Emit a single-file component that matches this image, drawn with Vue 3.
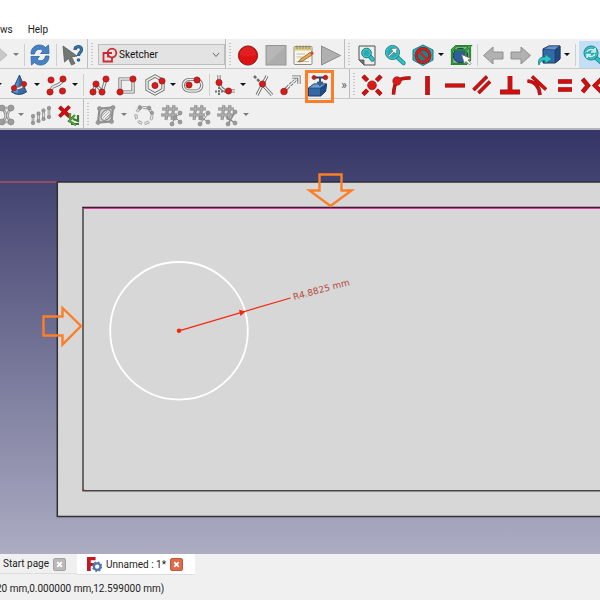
<script setup>
import { ref } from 'vue'

const workbench = ref('Sketcher')

const dot = (x, y, r = 3.1) =>
  `<circle cx="${x}" cy="${y}" r="${r}" fill="#dc1818" stroke="#8a1c1c" stroke-width=".7"/>`
const ball = (x, y, r = 2) =>
  `<circle cx="${x}" cy="${y}" r="${r}" fill="#9c9c9c" stroke="#868686" stroke-width=".7"/>`
const rod = (d, extra = '') =>
  `<path d="${d}" fill="none" stroke="#6c716e" stroke-width="3.2" ${extra}/><path d="${d}" fill="none" stroke="#eceeec" stroke-width="1.5" ${extra}/>`
const bar = (d, w = 4) =>
  `<path d="${d}" fill="none" stroke="#7e2020" stroke-width="${w}"/><path d="${d}" fill="none" stroke="#d40e0e" stroke-width="${w - 1.1}"/>`
const grayRod = (d) =>
  `<path d="${d}" fill="none" stroke="#8f8f8f" stroke-width="2.6"/><path d="${d}" fill="none" stroke="#dcdcdc" stroke-width="1"/>`
const lens = (x, y, r, hx, hy) =>
  `<path d="M${x + r * 0.7} ${y + r * 0.7}L${hx} ${hy}" stroke="#2a7e84" stroke-width="4.4" stroke-linecap="round"/><path d="M${x + r * 0.7} ${y + r * 0.7}L${hx} ${hy}" stroke="#27c3c7" stroke-width="2.8" stroke-linecap="round"/><circle cx="${x}" cy="${y}" r="${r}" fill="#2fa9b0" stroke="#27757b"/><circle cx="${x}" cy="${y}" r="${r - 1}" fill="none" stroke="#35d3d5" stroke-width="1"/>`
const hash = (tail) =>
  `<path d="M8 2L6 17M14 2L12 17M2 6H18M1 12H17" stroke="#888" stroke-width="3"/><path d="M8 2L6 17M14 2L12 17M2 6H18M1 12H17" stroke="#b0b0b0" stroke-width="1.4"/>${tail}`
const halfArrow =
  'M3 11C3 5 7 2 11.500 2C14 2 16 3 17.500 4.500L20.500 2L21 10.500H12.500L15 7.800C11.500 4.800 7.500 6.500 6.500 11Z'

const icons = {
  redoFaded: '<path d="M9 9H12V4L21 12L12 20V16H4V9Z" fill="#c9c9c9" stroke="#bababa"/>',
  refresh: `<g fill="#4683c6" stroke="#2f619f" stroke-width=".8"><path d="${halfArrow}"/><path d="${halfArrow}" transform="rotate(180 12 12)"/></g>`,
  whatsThis:
    '<path d="M3 3L17 13L11.500 14L15 20.500L11.500 22L8.500 15.500L4.500 19Z" fill="#727774" stroke="#575c59" stroke-width=".8"/><path d="M15 7C15 2.500 21.500 2.500 21.500 6.500C21.500 9.500 18.500 9.500 18.500 13" fill="none" stroke="#24547f" stroke-width="3.200"/><path d="M15 7C15 2.500 21.500 2.500 21.500 6.500C21.500 9.500 18.500 9.500 18.500 13" fill="none" stroke="#3b78b0" stroke-width="1.400"/><circle cx="18.500" cy="17" r="1.800" fill="#2c659c"/>',
  record:
    '<circle cx="12" cy="12.500" r="9.600" fill="#dd1212" stroke="#7d1c1c"/><path d="M4 12A8 8 0 0 1 20 12Q12 15 4 12Z" fill="#ef4040" opacity=".3"/>',
  stop: '<rect x="2" y="2.500" width="20" height="19.500" fill="#adadad" stroke="#979797"/><path d="M3 21V3.500H21Z" fill="#b7b7b7"/>',
  macro:
    '<rect x="3" y="3.500" width="18" height="18" rx="1" fill="#f7f6ec" stroke="#8f8d80"/><path d="M4 4H20V7.500H4Z" fill="#d9c878"/><path d="M6 2.500V6M9 2.500V6M12 2.500V6M15 2.500V6M18 2.500V6" stroke="#8e8563" stroke-width="1"/><path d="M5.500 11H14M5.500 14H12M5.500 18.500H18" stroke="#bcbcb4"/><path d="M9 16.500L19 9.500L21 12L11 18.500L7.500 19Z" fill="#efa841" stroke="#80603a" stroke-width=".8"/><path d="M19 9.500L21 8L23 10.500L21 12Z" fill="#c94a4a"/>',
  play: '<path d="M2.500 3L21.500 12.500L2.500 22Z" fill="#b0b0b0" stroke="#8c8c8c"/>',
  fitAll: `<path d="M4 3H20V22H9L4 17Z" fill="#eceeec" stroke="#4b504e"/><path d="M4 17H9V22Z" fill="#777" stroke="#4b504e" stroke-width=".8"/>${lens(11.5, 10, 4.8, 17.5, 16.5)}`,
  fitSelection: `${lens(9.5, 9.5, 7, 20.5, 20)}<path d="M5 13L10 8L8 6L14 5L13 11L11 9L6 14Z" fill="#fff" stroke="#4b7d80" stroke-width=".6"/>`,
  drawStyle:
    '<path d="M12 2L22 7V17L12 22.500L2 17V7Z" fill="#25bac2" stroke="#1d777c"/><circle cx="12" cy="12.500" r="6.800" fill="#1d8288" stroke="#702020" stroke-width="3.200"/><circle cx="12" cy="12.500" r="6.800" fill="none" stroke="#d91c1c" stroke-width="2.100"/><path d="M7.500 8L16.500 17" stroke="#d91c1c" stroke-width="2.300"/>',
  boundingBox:
    '<path d="M3 7L7 3H21V17L17 21H3Z" fill="#8ca4a8"/><circle cx="11.500" cy="12.500" r="7.200" fill="#2d5f9a" stroke="#1c3a60"/><path d="M3 7H17V21H3ZM3 7L7 3H21L17 7M21 3V17L17 21" fill="none" stroke="#195a1c" stroke-width="2.200"/><path d="M3 7H17V21H3ZM3 7L7 3H21L17 7M21 3V17L17 21" fill="none" stroke="#33b637" stroke-width="1.200"/><path d="M12.500 11.500L22 15.500L19 17L22 20.500L20.500 22L17 18.500L15.500 21Z" fill="#fff" stroke="#666" stroke-width=".7"/>',
  back: '<path d="M2.500 12.500L12 4V9H22V16H12V21Z" fill="#b1b1b1" stroke="#909090"/>',
  forward: '<path d="M21.500 12.500L12 4V9H2V16H12V21Z" fill="#b1b1b1" stroke="#909090"/>',
  linkView:
    '<path d="M6 6L12 3H23V16L18 20H6Z" fill="#336aa9" stroke="#1d3557"/><path d="M6 6L12 3H23L18 7Z" fill="#5f94d0" stroke="#1d3557" stroke-width=".6"/><path d="M18 7L23 3V16L18 20Z" fill="#1f4a80" stroke="#1d3557" stroke-width=".6"/><path d="M2 22C0 16 4 13.500 8 14V11L15 16L8 20.500V17.500C5 17 3 18.500 2 22Z" fill="#2cc6cb" stroke="#1a7075" stroke-width=".8"/>',
  zoomSync: `${lens(10, 10, 7, 21, 20)}<path d="M6 9C7 6 12 5.500 14 8.500M14 11C13 14 8 14.500 6 11.500M14 5V9H10M6 15V11.500H10" fill="none" stroke="#d3f3f3" stroke-width="1.500"/>`,
  cone: `<path d="M12.500 2L19.500 19Q12 24 4.500 19Z" fill="#356aa8" stroke="#183760" stroke-width=".8"/><path d="M12 4L11 20.500L6 19Z" fill="#5a8fcb"/>${rod('M7 15Q14 17 17 11')}${dot(7, 15, 2.6)}${dot(17, 11, 2.6)}`,
  bspline: `${rod('M5.500 19C7 9 15 16 18 6')}${dot(6, 7)}${dot(18, 6)}${dot(5, 19)}${dot(17.5, 18)}`,
  polyline: `${rod('M6 19L9 11L15 19L19 6')}${dot(6, 19)}${dot(9, 11)}${dot(15, 19)}${dot(19, 6)}`,
  rectangle: `${rod('M5 6H18V19H5Z')}${dot(5, 19)}${dot(18, 6)}`,
  hexagon: `${rod('M12 3L20 7.500V16.500L12 21L4 16.500V7.500Z')}${dot(12, 12.5)}${dot(19, 8)}`,
  slot: `${rod('M8 6.500H15A5.500 5.500 0 0 1 15 18H8A5.500 5.500 0 0 1 8 6.500Z')}${dot(8, 12)}${dot(16, 7)}`,
  fillet: `${rod('M6 2V8Q7 18 15 18H22')}<path d="M6 14V22M2 18.500H12" stroke="#727674" stroke-width="2" stroke-dasharray="2 1"/>${dot(6, 9.5)}${dot(15.5, 18)}`,
  trim: `${rod('M16 3L6 22M11 11L21 22')}<path d="M3 3L10 10" stroke="#6a6f6c" stroke-width="2.600" stroke-dasharray="3 1.500"/>${dot(11.5, 11)}`,
  extend: `${rod('M5 18L10 13')}${rod('M11 12L20 4', 'stroke-dasharray="3 1"')}${rod('M13 4H20V11')}${dot(5, 18.5, 3.3)}`,
  external:
    `<path d="M1.500 15L7 11H19.500L18.500 18.500L13.500 23H1.500Z" fill="#3467a5" stroke="#1e3a61"/><path d="M1.500 15L7 11H19.500L13.500 15Z" fill="#6a9fd7" stroke="#1e3a61" stroke-width=".6"/><path d="M13.500 15L19.500 11L18.500 18.500L13.500 23Z" fill="#214d84" stroke="#1e3a61" stroke-width=".6"/><path d="M7 4.500H18M13 5V11" stroke="#2b4260" fill="none" stroke-width="1.800"/><path d="M10 9L13 13L16 9Z" fill="#3467a5" stroke="#1e3a61" stroke-width=".6"/>${dot(7, 4.5, 2)}${dot(18.5, 4.5, 2.2)}`,
  coincident: `${bar('M3 3L7.500 7.500M21 3L16.500 7.500M3 21.500L7.500 17M21 21.500L16.500 17', 4.4)}${dot(12, 12.3, 4.4)}`,
  pointOn: `${bar('M5.500 21.500Q6 12 9 8Q14 4.500 22.500 5', 3.6)}${dot(9, 8, 4.2)}`,
  vertical: bar('M12.500 3V22', 4.6),
  horizontal: bar('M2 12.500H22', 4.2),
  parallel: bar('M3.500 17L17 3.500M8.500 20L20 8.500', 3.6),
  perpendicular: bar('M12 3V19M2 19H22', 4.8),
  tangent: bar('M7 3.500L21 16.500M2.500 8Q14 9 15 22', 3.6),
  equal: bar('M5 8.500H19M5 16.500H19', 4.4),
  symmetric: bar('M2.500 6L8 12.500L2.500 19M21.500 6L15 12.500L21.500 19', 4.4),
  mirror: `${grayRod('M11 5C16 10 16 15 11 19M21 5C15 10 15 15 21 19M11 5H20M11 19H20')}${ball(11, 5, 3)}${ball(20, 5, 3)}${ball(11, 19, 3)}${ball(20, 19, 3)}`,
  array: `${grayRod('M4 13V20M9.500 10.500V18M14.500 7.500V16M20 5V14')}${[[4, 13], [4, 20], [9.5, 10.5], [9.5, 18], [14.5, 7.5], [14.5, 16], [20, 5], [20, 14]].map(([x, y]) => ball(x, y, 1.7)).join('')}`,
  deleteAxes: `${bar('M2.500 4L12.500 13.500M12.500 3.500L2.500 13.500', 3.8)}<path d="M13 10V18M18 12L12 18L19 22M21 12V18L16 16M14 21L22 21" fill="none" stroke="#3a7a2f" stroke-width="2.200"/><path d="M13 10V18M18 12L12 18L19 22" fill="none" stroke="#62b347" stroke-width=".9"/>`,
  plane: `<path d="M5.500 5.500L19 4.500L17.500 18.500L4 19.500Z" fill="#cfcfcf" stroke="#909090" stroke-width="2.200"/><ellipse cx="12" cy="12" rx="4" ry="6" transform="rotate(40 12 12)" fill="#eee" stroke="#909090" stroke-width="1.300"/><path d="M9 15L15 9M8 13L13 8M11 16L16 11" stroke="#aaa"/>${ball(5.5, 5.5)}${ball(19, 4.5)}${ball(4, 19.5)}${ball(17.5, 18.5)}`,
  ring: `<circle cx="12" cy="12.500" r="8" fill="none" stroke="#9d9d9d" stroke-width="3" stroke-dasharray="4.600 2.600"/><circle cx="12" cy="12.500" r="8" fill="none" stroke="#eee" stroke-width="1.200" stroke-dasharray="3.600 3.600" stroke-dashoffset="-.500"/>${ball(8, 4.5, 1.9)}${ball(17, 5, 1.9)}${ball(20, 10, 1.7)}`,
  gridA: hash(`<path d="M12 21L15 14L20 11M16 15L20 19" stroke="#888" fill="none"/>${ball(12, 21)}${ball(20, 10)}${ball(15, 15)}${ball(20, 19)}`),
  gridB: hash(`<path d="M12 21L20 11M14 15L20 19" stroke="#888" fill="none"/>${ball(12, 21)}${ball(20, 10)}${ball(20, 19)}${ball(13, 15)}`),
  gridC: hash(`<path d="M10 14L19 20M19 9L12 21" stroke="#888" stroke-width="1.500" fill="none"/>${ball(19, 9)}${ball(19, 20)}${ball(12, 21)}`),
}

const t = (icon, label, extra = {}) => ({ kind: 'tool', icon, label, ...extra })
const split = (icon, label, extra = {}) => t(icon, label, { menu: true, ...extra })
const sep = { kind: 'sep' }

const file = [split('redoFaded', 'Redo', { disabled: true }), sep, t('refresh', 'Refresh'), sep, t('whatsThis', "What's this?")]
const macro = [t('record', 'Record macro'), t('stop', 'Stop macro', { disabled: true }), t('macro', 'Macros'), t('play', 'Execute macro', { disabled: true })]
const view = [
  t('fitAll', 'Fit all'), t('fitSelection', 'Fit selection'), split('drawStyle', 'Draw style'), t('boundingBox', 'Bounding box'), sep,
  t('back', 'Back', { disabled: true }), t('forward', 'Forward', { disabled: true }), split('linkView', 'Linked object'), sep,
  t('zoomSync', 'Sync view', { active: true }),
]
const geometry = [
  split('cone', 'Arc', { hiddenIcon: true }), split('cone', 'Conic'), split('bspline', 'B-spline'), sep,
  t('polyline', 'Polyline'), t('rectangle', 'Rectangle'), split('hexagon', 'Polygon'), t('slot', 'Slot'), sep,
  split('fillet', 'Fillet'), t('trim', 'Trim'), t('extend', 'Extend'), t('external', 'External geometry', { marked: true }),
]
const constraints = ['coincident', 'pointOn', 'vertical', 'horizontal', 'parallel', 'perpendicular', 'tangent', 'equal', 'symmetric'].map((n) => t(n, n))
const sketchTools = [split('mirror', 'Symmetry', { disabled: true }), t('array', 'Array', { disabled: true }), t('deleteAxes', 'Remove axes alignment')]
const splines = [
  split('plane', 'Spline information', { disabled: true }), t('ring', 'Convert to spline', { disabled: true }),
  t('gridA', 'Increase degree', { disabled: true }), t('gridB', 'Decrease degree', { disabled: true }),
  split('gridC', 'Knot multiplicity', { disabled: true }),
]

const rows = [
  { name: 'first', bars: [{ name: 'file', items: file }, { name: 'workbench', grip: true, picker: true, items: [] }, { name: 'macro', grip: true, even: true, items: macro }, { name: 'view', grip: true, items: view }] },
  { name: 'second', bars: [{ name: 'geometry', items: geometry, more: true }, { name: 'constraints', grip: true, even: true, items: constraints }] },
  { name: 'third', bars: [{ name: 'tools', items: sketchTools }, { name: 'splines', grip: true, items: splines }] },
]
</script>

<template>
  <div class="window">
    <nav class="menu">
      <a href="#">ws</a>
      <a href="#">Help</a>
    </nav>

    <div v-for="row in rows" :key="row.name" class="row" :class="row.name">
      <div v-for="group in row.bars" :key="group.name" class="bar" :class="[group.name, { even: group.even }]" role="toolbar" :aria-label="group.name">
        <span v-if="group.grip" class="grip"></span>
        <label v-if="group.picker" class="picker">
          <svg viewBox="0 0 16 16" width="16" height="16" fill="none" stroke="#cb2a33" stroke-width="1.800" aria-hidden="true">
            <path d="M6 6H1.500V14.500H10V10" /><circle cx="10" cy="6" r="4.300" /><path d="M6 10.500V6H10" />
          </svg>
          <select v-model="workbench" aria-label="Workbench">
            <option>Sketcher</option>
          </select>
          <svg class="chevron" viewBox="0 0 8 8" width="8" height="8" fill="none" stroke="#666" aria-hidden="true"><path d="M1 2L4 5.500L7 2" /></svg>
        </label>
        <template v-for="(item, i) in group.items" :key="i">
          <span v-if="item.kind === 'sep'" class="sep"></span>
          <button v-else type="button" class="tool" :class="{ split: item.menu, active: item.active, marked: item.marked }" :disabled="item.disabled" :aria-label="item.label">
            <svg class="icon" viewBox="0 0 24 24" aria-hidden="true" v-html="item.hiddenIcon ? '' : icons[item.icon]"></svg>
            <span v-if="item.menu" class="caret"></span>
          </button>
        </template>
        <button v-if="group.more" type="button" class="more" aria-label="More tools">»</button>
      </div>
    </div>

    <main class="scene">
      <svg viewBox="0 130 600 424" preserveAspectRatio="xMinYMin slice" role="img" aria-label="Sketch view">
        <defs>
          <linearGradient id="sky" x1="0" y1="0" x2="0" y2="1">
            <stop offset="0" stop-color="#353566" />
            <stop offset="1" stop-color="#acacc3" />
          </linearGradient>
        </defs>
        <rect y="130" width="600" height="424" fill="url(#sky)" />
        <path d="M0 182H57" stroke="#a8525f" stroke-width="1.400" />
        <rect x="57.300" y="182" width="560" height="334.500" fill="#d7d7d7" stroke="#2f2f35" stroke-width="1.500" />
        <path d="M600 490.700H83V208" fill="none" stroke="#444" stroke-width="1.500" />
        <path d="M82.300 207.300H600" stroke="#1b0b18" stroke-width="1.200" />
        <path d="M84 208.400H600" stroke="#d2409c" stroke-width="1.200" />
        <circle cx="83.500" cy="490" r="1" fill="#b33022" />
        <circle cx="179" cy="330.800" r="68.800" fill="none" stroke="#fff" stroke-width="1.800" />
        <path d="M179 330.800L290.500 298" stroke="#f4260b" stroke-width="1.200" />
        <circle cx="179" cy="330.800" r="2.200" fill="#f4260b" />
        <path d="M245.500 311.500L239 309.800L240.500 316Z" fill="#f4260b" />
        <text class="dimension" transform="translate(294 300) rotate(-15)">R4.8825 mm</text>
        <g fill="none" stroke="#fc7f27" stroke-width="2.400">
          <path d="M319.500 174.500H341.500V190.500H351.500L330.500 206L309.500 190.500H319.500Z" />
          <path d="M43.500 316.500H62.500V308L81 326L62.500 344.500V335.500H43.500Z" />
        </g>
      </svg>
    </main>

    <div class="tabs">
      <div class="tab">
        <a href="#">Start page</a>
        <button type="button" class="close" aria-label="Close Start page"><svg viewBox="0 0 12 12"><path d="M3.500 3.500L8.500 8.500M8.500 3.500L3.500 8.500" /></svg></button>
      </div>
      <div class="tab current">
        <svg class="doc" viewBox="0 0 14 14" aria-hidden="true">
          <path d="M0 0H8V3H3.500V5.500H6.500V8.500H3.500V13H0Z" fill="#c8171e" />
          <circle cx="9.500" cy="9" r="3" fill="none" stroke="#4f76ad" stroke-width="2" />
          <circle cx="9.500" cy="9" r="4.200" fill="none" stroke="#4f76ad" stroke-width="1.400" stroke-dasharray="1.700 1.600" />
        </svg>
        <a href="#">Unnamed : 1*</a>
        <button type="button" class="close" aria-label="Close Unnamed"><svg viewBox="0 0 12 12"><path d="M3.500 3.500L8.500 8.500M8.500 3.500L3.500 8.500" /></svg></button>
      </div>
    </div>
    <footer class="status">20 mm,0.000000 mm,12.599000 mm)</footer>
  </div>
</template>

<style>
body {
  background: #f0f0f0;
}
</style>

<style scoped>
.window {
  display: flex;
  flex-direction: column;
  min-height: 100vh;
  overflow: hidden;
  background: #f0f0f0;
  color: #222;
  font: 10px/14px Roboto, "Noto Sans", sans-serif;
}
a {
  color: inherit;
  text-decoration: none;
}
button {
  padding: 0;
  border: 0;
  background: none;
  color: inherit;
  font: inherit;
}
.menu {
  display: flex;
  gap: 15px;
  padding: 23px 0 2px;
  background: #fff;
}
.row {
  display: flex;
  height: 30px;
  box-sizing: border-box;
  border-bottom: 1px solid #c9c9c9;
}
.third {
  height: 31px;
  border-bottom: 2px solid #b4b4be;
}
.bar {
  display: flex;
  flex: none;
  align-items: center;
  padding-top: 2px;
  border-right: 1px solid #bdbdbd;
}
.bar:last-child {
  border-right: 0;
}
.file {
  margin-left: -16px;
  padding-right: 1px;
}
.geometry {
  margin-left: -33px;
}
.tools {
  margin-left: -11px;
}
.grip {
  width: 2px;
  height: 24px;
  margin: 0 3px;
  background: repeating-linear-gradient(#c6c6c6 0 1px, transparent 1px 3px);
}
.sep {
  width: 1px;
  height: 22px;
  margin: 0 1px 0 2px;
  background: #cfcfcf;
}
.tool {
  display: flex;
  flex: none;
  align-items: center;
  justify-content: center;
  position: relative;
  width: 28px;
  height: 27px;
}
.even .tool:nth-of-type(even) {
  width: 27px;
}
.split {
  width: 38px;
  justify-content: flex-start;
  gap: 1px;
  padding-left: 2px;
}
.icon {
  flex: none;
  width: 24px;
  height: 24px;
}
.caret {
  width: 0;
  border: 3px solid transparent;
  border-top-color: #111;
  border-bottom: 0;
  margin-left: 2px;
}
.tool:disabled .caret {
  border-top-color: #7d7d7d;
}
.active {
  margin-left: 2px;
  background: #c3dff5;
}
.marked::after {
  content: "";
  position: absolute;
  top: -1px;
  left: 0;
  z-index: 1;
  width: 23px;
  height: 27px;
  border: 3px solid #fc7f27;
}
.more {
  width: 16px;
  padding-left: 6px;
  color: #555;
  font-size: 12px;
}
.picker {
  display: flex;
  align-items: center;
  box-sizing: border-box;
  width: 127px;
  height: 21px;
  margin-left: 2px;
  padding: 0 4px 0 3px;
  border: 1px solid #bcbcbc;
  background: #e3e3e3;
}
.picker select {
  flex: 1;
  min-width: 0;
  margin-left: 1px;
  padding: 0;
  border: 0;
  appearance: none;
  background: none;
  color: #111;
  font: inherit;
}
.scene {
  flex: 1;
  position: relative;
  min-height: 200px;
  background: #353566;
}
.scene svg {
  position: absolute;
  inset: 0;
  width: 100%;
  height: 100%;
}
.dimension {
  fill: #b84a3c;
  font: 9px "DejaVu Sans", sans-serif;
}
.tabs {
  display: flex;
  height: 21px;
}
.tab {
  display: flex;
  align-items: center;
  gap: 4px;
  box-sizing: border-box;
  height: 20px;
  padding: 1px 11px 0 3px;
  border-bottom: 1px solid #dedede;
}
.current {
  height: 21px;
  padding: 1px 12px 0 10px;
  background: #fff;
}
.doc {
  width: 15px;
  height: 15px;
}
.close {
  width: 13px;
  height: 13px;
  border: 1px solid #a3a3a3;
  border-radius: 2px;
  background: #b9b9b9;
}
.close svg {
  display: block;
  width: 11px;
  height: 11px;
  fill: none;
  stroke: #fff;
  stroke-width: 2;
}
.current .close {
  border-color: #c0583c;
  background: #e0694a;
}
.status {
  margin-left: -4px;
  padding: 7px 0 4px;
  white-space: nowrap;
}
</style>
